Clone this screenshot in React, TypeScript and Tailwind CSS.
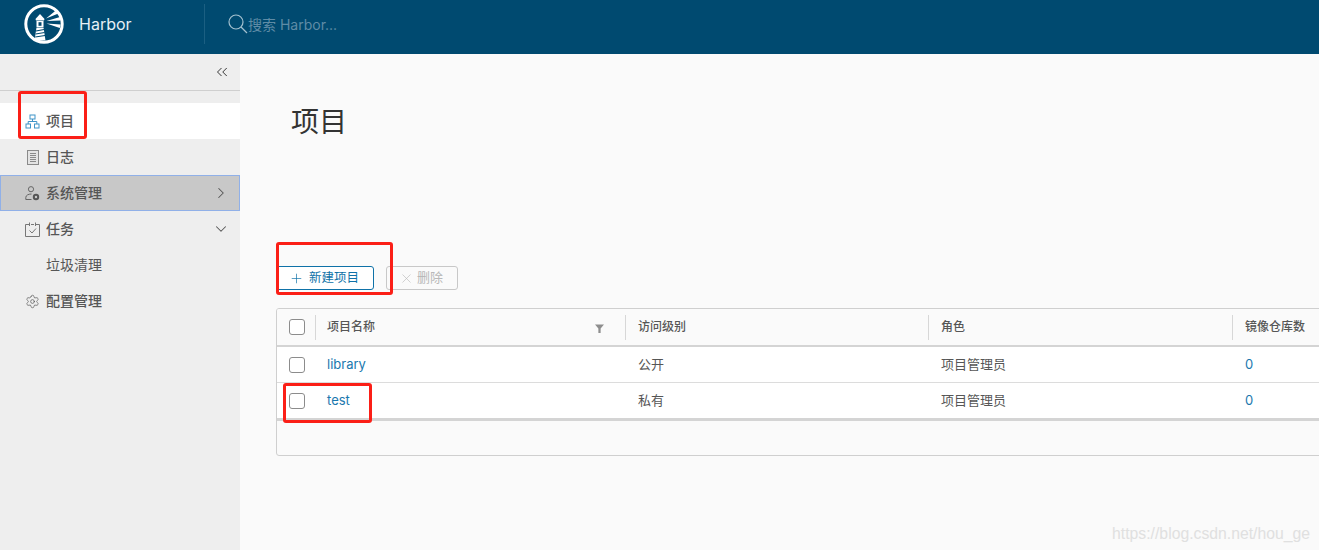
import React from "react";
import { ChevronsLeft, ChevronRight, ChevronDown, Plus, X, Settings } from "lucide-react";

const FONT = "font-['Inter','Noto_Sans_CJK_SC',sans-serif]";

function Logo() {
  return (
    <svg width="40" height="40" viewBox="0 0 40 40" fill="none">
      <circle cx="20" cy="20" r="18.2" stroke="#fff" strokeWidth="3" />
      <path d="M11.5 15 L16 10 L20.5 15 L20 16.5 H12 Z" fill="#fff" />
      <rect x="12.5" y="17" width="7" height="6" fill="#fff" />
      <rect x="14.5" y="18.2" width="3" height="3.6" fill="#004a70" />
      <path d="M12.5 23.5 H19.5 L21.5 36.5 H10.5 Z" fill="#fff" />
      <path d="M12 27 L20 25.5 M11.6 30 L20.6 28.5 M11.2 33 L21 31.5" stroke="#004a70" strokeWidth="1.1" />
      <path d="M22 14.5 L31.5 6.8 L33.8 9.8 Z M22.5 17 L36 13 L36.6 16.5 Z M22.5 19.5 L36.6 20.5 L35.8 24 Z" fill="#fff" />
    </svg>
  );
}

function SearchIcon() {
  return (
    <svg width="20" height="20" viewBox="0 0 20 20" fill="none" stroke="#a3c0cf" strokeWidth="1.2">
      <circle cx="8" cy="8" r="7" />
      <path d="M13 13 L19 19" />
    </svg>
  );
}

function ProjectsIcon() {
  return (
    <svg width="15" height="15" viewBox="0 0 15 15" fill="none" stroke="#3f94c8" strokeWidth="1">
      <rect x="5" y="1" width="5" height="4" />
      <rect x="1" y="10" width="4.5" height="4" />
      <rect x="9.5" y="10" width="4.5" height="4" />
      <path d="M7.5 5 V7.5 M3.2 10 V7.5 H11.8 V10" />
    </svg>
  );
}

function LogIcon() {
  return (
    <svg width="12" height="15" viewBox="0 0 12 15" fill="none" stroke="#8a8a8a" strokeWidth="1">
      <rect x="0.5" y="0.5" width="11" height="14" fill="#e4e4e4" />
      <path d="M3 3.5 H9 M3 5.5 H9 M3 7.5 H9 M3 9.5 H9 M3 11.5 H9" />
    </svg>
  );
}

function AdminIcon() {
  return (
    <svg width="15" height="15" viewBox="0 0 15 15" fill="none" stroke="#666" strokeWidth="1">
      <circle cx="6" cy="3.2" r="2.6" />
      <path d="M0.8 13.5 V11.5 C0.8 9.2 3.5 8 6.5 8" />
      <path d="M0.8 13.5 H6.5" />
      <circle cx="11" cy="11" r="2.2" strokeWidth="2" stroke="#555" />
    </svg>
  );
}

function TaskIcon() {
  return (
    <svg width="15" height="15" viewBox="0 0 15 15" fill="none" stroke="#777" strokeWidth="1">
      <path d="M4 2.5 H0.5 V14.5 H14.5 V2.5 H11 M6 2.5 H9" />
      <path d="M4.5 0.5 V4 M10.5 0.5 V4" />
      <path d="M4.5 8.5 L7 11 L11 6.5" />
    </svg>
  );
}

function NavItem({
  icon,
  label,
  right,
  active,
  selected,
  regular,
}: {
  icon?: React.ReactNode;
  label: string;
  right?: React.ReactNode;
  active?: boolean;
  selected?: boolean;
  regular?: boolean;
}) {
  return (
    <div
      className={`flex h-9 items-center text-[14px] text-[#565656] ${regular ? "" : "font-medium"} ${
        active ? "bg-white" : ""
      } ${selected ? "border border-[#90b0e8] bg-[#c8c8c8] pr-[9px]" : "pr-[10px]"}`}
    >
      <span className={`flex shrink-0 items-center ${selected ? "w-[45px] pl-[24px]" : "w-[46px] pl-[25px]"}`}>
        <span className="flex w-[15px] justify-center">{icon}</span>
      </span>
      <span className="flex-1 -translate-y-[1px]">{label}</span>
      {right}
    </div>
  );
}

const GRID = "grid grid-cols-[38px_310px_303px_304px_1fr]";

function Checkbox() {
  return <span className="block h-4 w-4 rounded-[3px] border border-[#8c8c8c] bg-white" />;
}

function Head({ label, right, first }: { label: string; right?: React.ReactNode; first?: boolean }) {
  return (
    <div className="flex h-[36px] items-center pt-[6px] pb-[5px]">
      <div
        className={`flex h-[25px] w-full items-center border-l border-[#d7d7d7] pr-[21px] text-[12px] font-medium text-[#565656] ${
          first ? "pl-[11px]" : "pl-[12px]"
        }`}
      >
        <span className="flex-1 -translate-y-[1px]">{label}</span>
        {right}
      </div>
    </div>
  );
}

function Row({ name, access, last }: { name: string; access: string; last?: boolean }) {
  return (
    <div
      className={`${GRID} items-center bg-white text-[13px] text-[#565656] ${
        last ? "h-[35px]" : "h-[36px] border-b border-[#dcdcdc]"
      }`}
    >
      <div className="pl-3">
        <Checkbox />
      </div>
      <div className="pl-[12px] text-[#1a78ae]">{name}</div>
      <div className="pl-[13px]">{access}</div>
      <div className="pl-[13px]">项目管理员</div>
      <div className="pl-[13px] text-[#1a78ae]">0</div>
    </div>
  );
}

function Mark({ className }: { className: string }) {
  return <div className={`pointer-events-none absolute rounded-[3px] border-[3px] border-[#fb1f17] ${className}`} />;
}

export default function App() {
  return (
    <div className={`relative flex h-[550px] w-[1319px] flex-col overflow-hidden bg-[#fafafa] ${FONT}`}>
      <header className="flex h-[54px] shrink-0 items-center bg-[#004a70] pb-[6px]">
        <div className="flex w-[204px] items-center pl-[24px]">
          <Logo />
          <span className="ml-[15px] text-[16px] text-[#e6f0f5]">Harbor</span>
        </div>
        <div className="h-10 w-px bg-[#1b5f82]" />
        <div className="ml-[23px] flex items-center text-[14px] text-[#5f8ca6]">
          <SearchIcon />
          <span>搜索 Harbor...</span>
        </div>
      </header>
      <div className="flex min-h-0 flex-1">
        <aside className="w-[240px] shrink-0 bg-[#eeeeee]">
          <div className="flex h-[37px] items-center justify-end border-b border-[#cfcfcf] pr-[9px]">
            <ChevronsLeft size={18} strokeWidth={1.3} className="text-[#333]" />
          </div>
          <nav className="pt-3">
            <NavItem active icon={<ProjectsIcon />} label="项目" />
            <NavItem icon={<LogIcon />} label="日志" />
            <NavItem
              selected
              icon={<AdminIcon />}
              label="系统管理"
              right={<ChevronRight size={18} strokeWidth={1.4} className="text-[#555]" />}
            />
            <NavItem
              icon={<TaskIcon />}
              label="任务"
              right={<ChevronDown size={18} strokeWidth={1.4} className="text-[#555]" />}
            />
            <NavItem regular label="垃圾清理" />
            <NavItem icon={<Settings size={15} strokeWidth={1.1} className="text-[#555]" />} label="配置管理" />
          </nav>
        </aside>
        <main className="min-w-0 flex-1 pl-[36px]">
          <h1 className="mt-[50px] ml-[15px] text-[28px] leading-[36px] font-normal text-[#333]">项目</h1>
          <div className="mt-[126px] flex gap-3">
            <button className="flex h-[24px] w-[98px] items-center rounded-[3px] border border-[#0f72a8] bg-white pl-[12px] text-[12.5px] text-[#0f72a8]">
              <Plus size={15} strokeWidth={1.1} className="mr-[5px]" />
              新建项目
            </button>
            <button className="flex h-[24px] w-[72px] items-center rounded-[3px] border border-[#c8c8c8] pl-[12px] text-[13px] text-[#b8b8b8]">
              <X size={15} strokeWidth={1} className="mr-[3px]" />
              删除
            </button>
          </div>
          <div className="mt-[18px] w-[1100px] overflow-hidden rounded-[3px] border border-[#cfcfcf]">
            <div className={`${GRID} border-b-2 border-[#d4d4d4] bg-[#fafafa]`}>
              <div className="flex h-[36px] items-center pl-3">
                <Checkbox />
              </div>
              <Head
                first
                label="项目名称"
                right={
                  <svg width="9" height="9" viewBox="0 0 8 8" className="translate-y-[1px]">
                    <path d="M0 0.5 H8 L5 4 V8 H3 V4 Z" fill="#8e8e8e" />
                  </svg>
                }
              />
              <Head label="访问级别" />
              <Head label="角色" />
              <Head label="镜像仓库数" />
            </div>
            <Row name="library" access="公开" />
            <Row name="test" access="私有" last />
            <div className="h-[37px] border-t-[3px] border-[#d4d4d4]" />
          </div>
        </main>
      </div>
      <div className="absolute top-[522px] right-[9px] font-['Liberation_Sans',sans-serif] text-[15.75px] text-[#e0e0e0]">
        https://blog.csdn.net/hou_ge
      </div>
      <Mark className="top-[91px] left-[18px] h-[48px] w-[69px]" />
      <Mark className="top-[242px] left-[276px] h-[53px] w-[117px]" />
      <Mark className="top-[383px] left-[283px] h-[40px] w-[89px]" />
    </div>
  );
}
